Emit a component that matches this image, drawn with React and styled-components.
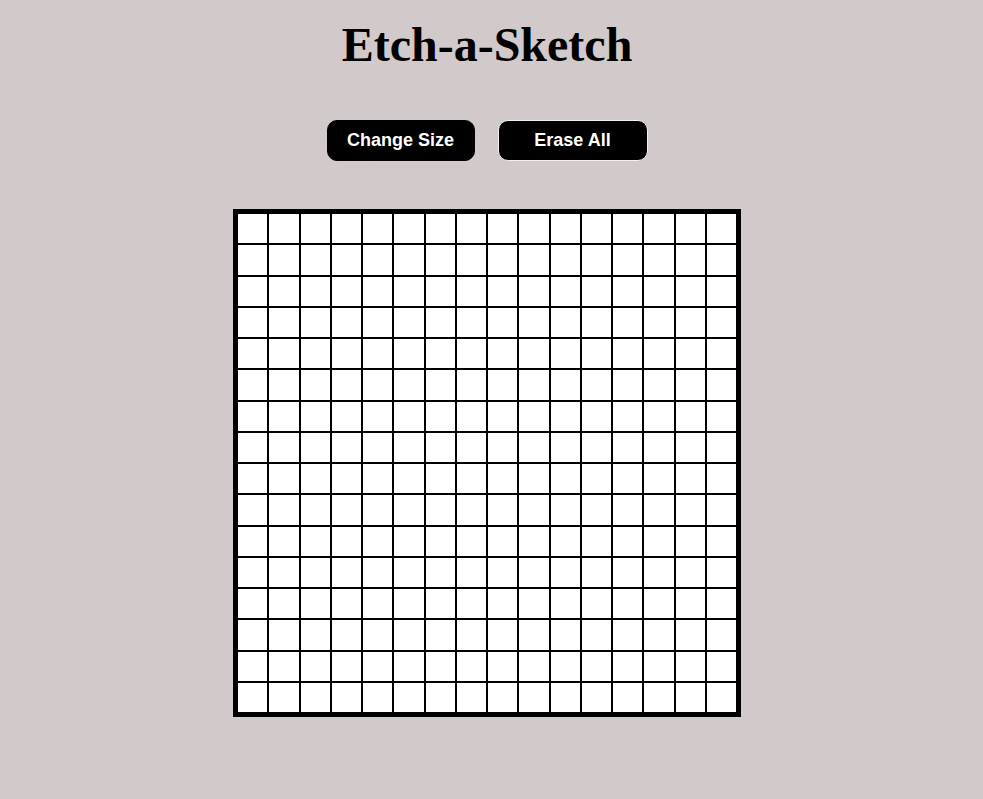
import styled, { createGlobalStyle } from 'styled-components';

const GRID_SIZE = 16;

const GlobalStyle = createGlobalStyle`
  html, body {
    margin: 0;
    padding: 0;
    background: #d2c9ca;
  }
`;

const Page = styled.main`
  display: flex;
  flex-direction: column;
  align-items: center;
  gap: 48px;
  padding: 17px 9px 60px 0;
  min-height: 100vh;
  box-sizing: border-box;
`;

const Title = styled.h1`
  margin: 0;
  font-family: 'Liberation Serif', 'Times New Roman', serif;
  font-size: 48px;
  font-weight: 700;
  color: #000;
`;

const Controls = styled.div`
  display: flex;
  gap: 23px;
`;

const Button = styled.button`
  width: ${(p) => (p.$outlined ? '150px' : '148px')};
  height: 41px;
  display: flex;
  align-items: center;
  justify-content: center;
  padding: 0;
  border: 1px solid ${(p) => (p.$outlined ? '#f4f0f0' : '#000')};
  border-radius: 10px;
  background: #000;
  color: #fff;
  font-family: 'Liberation Sans', Arial, sans-serif;
  font-size: 18px;
  font-weight: 700;
  cursor: pointer;
`;

const Board = styled.div`
  width: 500px;
  height: 500px;
  border: 4px solid #000;
  display: grid;
  grid-template-columns: repeat(${(p) => p.$size}, 1fr);
  grid-template-rows: repeat(${(p) => p.$size}, 1fr);
  background: #fff;
`;

const Cell = styled.div`
  border: 1px solid #000;
  background: #fff;
`;

export default function App() {
  const cells = Array.from({ length: GRID_SIZE * GRID_SIZE });

  return (
    <>
      <GlobalStyle />
      <Page>
        <Title>Etch-a-Sketch</Title>
        <Controls>
          <Button>Change Size</Button>
          <Button $outlined>Erase All</Button>
        </Controls>
        <Board $size={GRID_SIZE}>
          {cells.map((_, i) => (
            <Cell key={i} />
          ))}
        </Board>
      </Page>
    </>
  );
}
